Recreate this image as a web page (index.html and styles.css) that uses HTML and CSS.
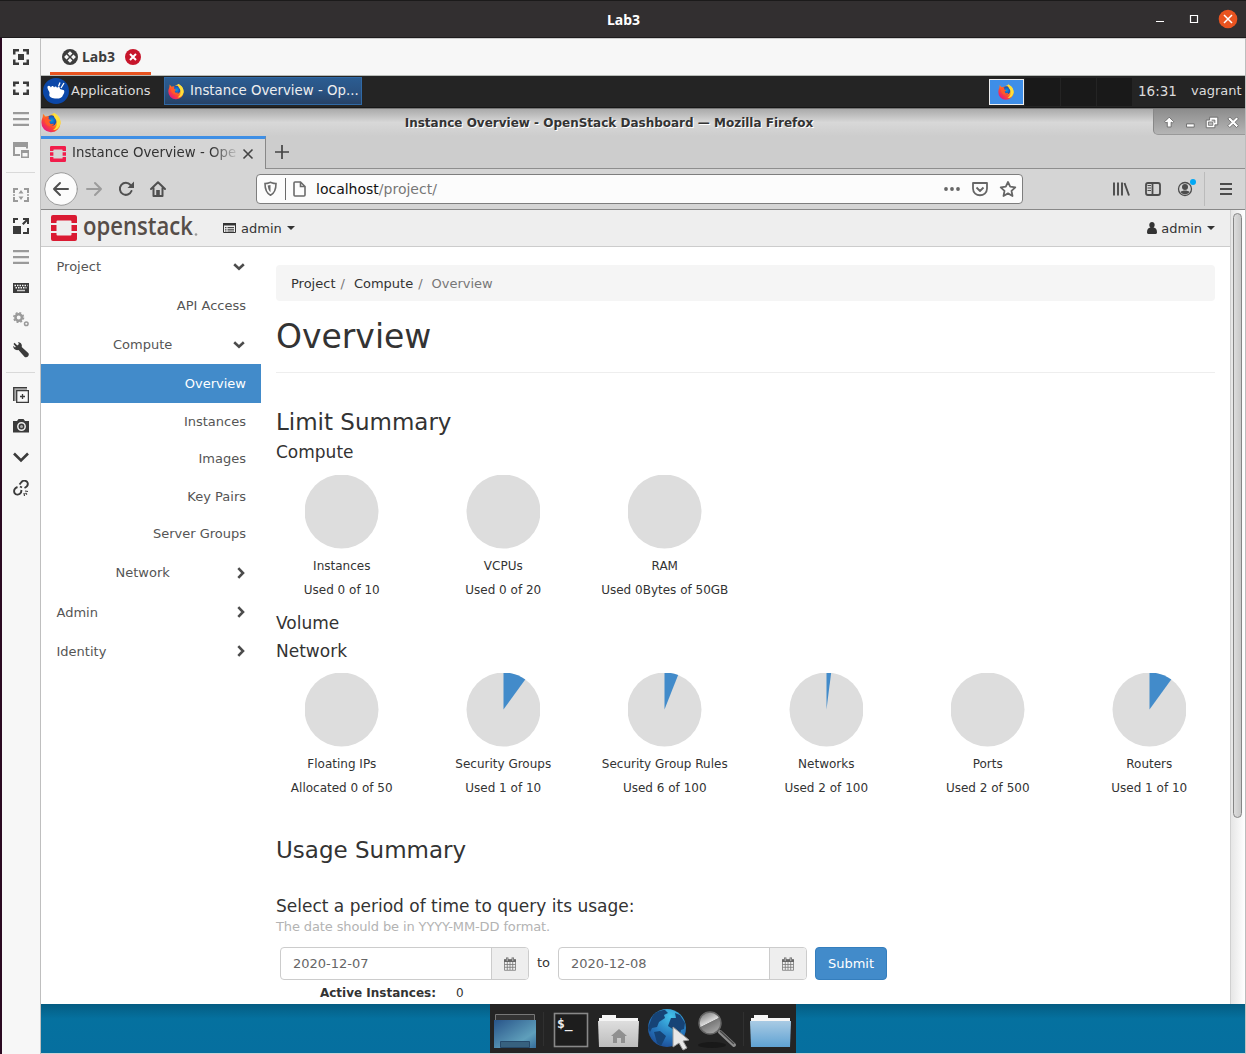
FILE: index.html
```html
<!DOCTYPE html>
<html lang="en">
<head>
<meta charset="utf-8">
<title>Lab3</title>
<link rel="stylesheet" href="styles.css">
</head>
<body>
<svg class="defs" width="0" height="0" aria-hidden="true">
  <defs>
    <linearGradient id="ffBody" x1="0.9" y1="0.1" x2="0.15" y2="0.9">
      <stop offset="0" stop-color="#fff44f"/><stop offset="0.35" stop-color="#ffa31a"/><stop offset="0.65" stop-color="#ff4a2f"/><stop offset="1" stop-color="#e31587"/>
    </linearGradient>
    <radialGradient id="ffGlobe"><stop offset="0" stop-color="#0a9de0"/><stop offset="1" stop-color="#1e3fae"/></radialGradient>
    <symbol id="firefox" viewBox="0 0 20 20">
      <path fill="url(#ffBody)" d="M2 1.2 4.5 4 8 3.3 13 0.6C17 2.5 19.8 6 19.6 10.6A9.6 9.4 0 1 1 .4 10C.4 7 1.6 5.600 1.800 4z"/>
      <circle cx="10.500" cy="8" r="5.200" fill="url(#ffGlobe)"/>
      <path fill="#ff5a2a" d="M4 4.500 8 4 7.600 6.500 10.300 8 8.200 9.300 9.500 11.500 13 11.200C12 14 8 14.500 5.500 12 3.500 10 3.300 7 4 4.500z"/>
      <path fill="#ffe03a" d="M12.600.7C17 2.500 19.800 6.500 19.400 11 18.500 15.500 15 17.800 12 17.600 15.500 15.500 16.500 12 15.500 8.500 14.800 6 12 4.500 12.600.7z"/>
    </symbol>
    <symbol id="stack" viewBox="0 0 26 26">
      <path d="M2 0h22a2 2 0 0 1 2 2v6h-5.500V6.500a1 1 0 0 0-1-1h-13a1 1 0 0 0-1 1V8H0V2a2 2 0 0 1 2-2zM0 10h5.500v6H0zM20.500 10H26v6h-5.500zM0 18h5.500v1.500a1 1 0 0 0 1 1h13a1 1 0 0 0 1-1V18H26v6a2 2 0 0 1-2 2H2a2 2 0 0 1-2-2z"/>
    </symbol>
    <symbol id="calendar" viewBox="0 0 12 14">
      <path fill="none" stroke="#777" stroke-width=".8" d="M.5 3h11v10.300H.5zM.5 7.500h11M.5 10.300h11M3.300 5v8M6 5v8M8.700 5v8"/>
      <path fill="#666" d="M0 2.300h12V5H0zM2 .5h2.400v4H2zM7.600.5H10v4H7.600z"/>
      <path stroke="#eee" stroke-width=".7" d="M3.200 1.200v2.800M8.800 1.200v2.800"/>
    </symbol>
    <symbol id="down" viewBox="0 0 12 8"><path fill="none" stroke="#4c4c4c" stroke-width="2.600" d="M1.200 1.300 6 5.800l4.800-4.500"/></symbol>
    <symbol id="right" viewBox="0 0 8 12"><path fill="none" stroke="#4c4c4c" stroke-width="2.600" d="m1.300 1.200 4.700 4.800-4.700 4.800"/></symbol>
    <linearGradient id="monitor" x1="0" y1="0" x2="1" y2="1"><stop offset="0" stop-color="#285489"/><stop offset=".7" stop-color="#5f9fbb"/><stop offset="1" stop-color="#356c9b"/></linearGradient>
    <linearGradient id="grayFolder" x1="0" y1="0" x2="0" y2="1"><stop offset="0" stop-color="#dedede"/><stop offset="1" stop-color="#bdbdbd"/></linearGradient>
    <linearGradient id="blueFolder" x1="0" y1="0" x2="0" y2="1"><stop offset="0" stop-color="#a9cbe4"/><stop offset="1" stop-color="#5fa2d3"/></linearGradient>
    <radialGradient id="globe" cx=".6" cy=".2" r=".85"><stop offset="0" stop-color="#43c1ea"/><stop offset=".6" stop-color="#2678bd"/><stop offset="1" stop-color="#1d4c96"/></radialGradient>
    <linearGradient id="lens" x1=".2" y1="0" x2=".7" y2="1"><stop offset="0" stop-color="#777"/><stop offset=".48" stop-color="#ddd"/><stop offset=".5" stop-color="#777"/><stop offset="1" stop-color="#aaa"/></linearGradient>
  </defs>
</svg>

<header class="titlebar">
  <h1>Lab3</h1>
  <svg class="win-buttons" width="80" height="20" viewBox="0 0 80 20">
    <path stroke="#fff" d="M2 11.500h8"/><path fill="none" stroke="#fff" stroke-width="1.200" d="M36.500 5.500h7v7h-7z"/>
    <circle cx="74" cy="9" r="9.300" fill="#e95420"/><path stroke="#fff" stroke-width="1.500" d="m70 5 8 8m0-8-8 8"/>
  </svg>
</header>

<div class="viewer">
  <aside class="tools">
    <i><svg viewBox="0 0 16 16"><path d="M0 5.500V0h6v2.500H2.500v3zM10 0h6v5.500h-2.500v-3H10zM0 10.500h2.500v3H6V16H0zM13.500 10.500H16V16h-6v-2.500h3.500zM5 5h6v6H5z"/></svg></i>
    <i><svg viewBox="0 0 16 16"><path d="M0 6.500V1.500h6V4H2.500v2.500zM10 1.500h6v5h-2.500V4H10zM0 9.500h2.500v3H6V15H0zM13.500 9.500H16V15h-6v-2.500h3.500z"/></svg></i>
    <i class="dim"><svg viewBox="0 0 16 16"><path d="M0 1h16v2.300H0zM0 7h16v2.300H0zM0 12.700h16V15H0z"/></svg></i>
    <i class="dim"><svg viewBox="0 0 16 16"><path d="M0 0h15v6.500h-2V5H2v7h5v2H0zM8 8h8v8H8zm1.500 3v3.500h5V11z" fill-rule="evenodd"/></svg></i>
    <hr>
    <i class="dim"><svg viewBox="0 0 16 16"><path d="M0 6V1h5v2H2v3zM11 1h5v5h-2V3h-3zM0 10h2v3h3v2H0zM14 10h2v5h-5v-2h3zM8 3l2.500 3.500h-5zM8 13l2.500-3.500h-5zM0 7.200h2v1.600H0zM14 7.200h2v1.600h-2z"/></svg></i>
    <i><svg viewBox="0 0 16 16"><path d="M0 0h5v2H2v3H0zM10 0h6v6h-2V3.500L10.500 7 9 5.500 12.500 2H10zM0 8h8v8H0zM10 14h4v-4h2v6h-6z"/></svg></i>
    <i class="dim"><svg viewBox="0 0 16 16"><path d="M0 1h16v2.300H0zM0 7h16v2.300H0zM0 12.700h16V15H0z"/></svg></i>
    <i><svg viewBox="0 0 16 16"><path d="M0 3h16v10H0z"/><path stroke="#f7f7f7" stroke-width="1.400" stroke-dasharray="1.500 1" d="M1.500 5.500h13M2.500 7.800h11"/><path stroke="#ccc" stroke-width="1.500" d="M4 10.500h8"/></svg></i>
    <i class="dim"><svg viewBox="0 0 16 16"><circle cx="5.700" cy="6.500" r="3.200" fill="none" stroke="#9a9a9a" stroke-width="2.500"/><circle cx="5.700" cy="6.500" r="4.800" fill="none" stroke="#9a9a9a" stroke-width="1.600" stroke-dasharray="2 1.770"/><circle cx="13.300" cy="12.700" r="1.800" fill="none" stroke="#9a9a9a" stroke-width="1.500"/></svg></i>
    <i><svg viewBox="0 0 16 16"><path d="M1.500.8 4.300 3.600 6 1.900 4.800.2C8 0 9.400 2.500 8.700 5l6.800 6.300c1.200 2.500-1.500 5-3.800 3.700L5.500 8C2.500 8.700 0 7 .2 3.700L2 5.500l.8-.8L.5 2z"/></svg></i>
    <hr>
    <i><svg viewBox="0 0 16 16"><path fill="#aaa" d="M1 1h13v2H3v11H1z"/><path fill="none" stroke="#3b3b3b" d="M.7 14V.6H14M3.700 3.700h11.700v11.700H3.700z" stroke-width="1.300"/><path stroke="#3b3b3b" stroke-width="1.300" d="M9.500 7v5M7 9.500h5"/></svg></i>
    <i><svg viewBox="0 0 16 16"><path d="M0 3h4l1.500-2h5L12 3h4v11.500H0z"/><circle cx="8.500" cy="8.500" r="3.700" fill="#3b3b3b" stroke="#eee" stroke-width="1.500"/><circle cx="8.500" cy="8.500" r="1.500" fill="#aaa"/></svg></i>
    <i><svg viewBox="0 0 16 16"><path fill="none" stroke="#3b3b3b" stroke-width="2.600" d="m1 4.500 7 7 7-7"/></svg></i>
    <i><svg viewBox="0 0 16 16"><path fill="none" stroke="#3b3b3b" stroke-width="1.900" d="M6.500 4.500 8.500 2C10.500-.2 14 .5 14.700 3c.6 2.500-1 4-3.200 5M9 7.500 7 6.500M4.500 7C1.500 8 .5 10.500 1.500 13c1.500 2.500 5 2 6.500-.5L8.500 10"/><path stroke="#3b3b3b" stroke-width="1.200" d="m12 11 3 .5M11 13l.5 3M12.500 13l1.500 1.500"/></svg></i>
  </aside>

  <div class="remote">
    <nav class="viewer-tabs">
      <div class="viewer-tab">
        <svg width="16" height="16" viewBox="0 0 16 16"><circle cx="8" cy="8" r="8" fill="#3d3d3d"/><path fill="#f7f7f7" d="m8 2.200 2.400 2.400L8 7 5.600 4.600zM4.500 5.600 7 8l-2.500 2.400L2.100 8zM11.500 5.600 13.900 8l-2.400 2.400L9 8zM8 9l2.400 2.400L8 13.800l-2.400-2.400z"/></svg>
        <span>Lab3</span>
        <svg width="16" height="16" viewBox="0 0 16 16"><circle cx="8" cy="8" r="8" fill="#c7162b"/><path stroke="#fff" stroke-width="2" d="m5 5 6 6m0-6-6 6"/></svg>
      </div>
    </nav>

    <div class="panel">
      <svg class="xfce" width="26" height="26" viewBox="0 0 26 26"><circle cx="13" cy="13" r="13" fill="#0b47a8"/><path fill="#fff" d="M4.500 8.500C6 7 7 8 8 9.500c.5-2 2.500-2 3 0 .8-1.500 2.500-1.300 3 .3C15.500 8.500 17 9 17 11l4 1.200c1 2-.5 3.800-1 4.800-1 3-4 4-8 3.500-4-.5-6.500-2-5.500-5C7 13.500 4 11.500 4.500 8.500z"/><path stroke="#fff" stroke-width="1.300" d="m15.500 8.500 1.500-4M18 10l3-5"/></svg>
      <span class="apps">Applications</span>
      <div class="task"><svg width="16" height="17"><use href="#firefox"/></svg><span>Instance Overview - Op...</span></div>
      <div class="pager"><b><svg width="16" height="16"><use href="#firefox"/></svg></b><b></b><b></b><b></b></div>
      <span class="clock">16:31</span><span class="user">vagrant</span>
    </div>

    <div class="ff-title">
      <svg width="20" height="21"><use href="#firefox"/></svg>
      <h2>Instance Overview - OpenStack Dashboard — Mozilla Firefox</h2>
      <svg class="ff-win" width="92" height="26" viewBox="0 0 92 26">
        <g fill="#fff" stroke="#666" stroke-width=".9"><path d="m14.500 8.500 4.700 4.700-1.200 1.300-1.500-.8v5h-4v-5l-1.500.8-1.200-1.300zM32.500 15.500h8v3.300h-8zM56.500 8.500h8.500v8h-3v3h-9v-8h3.500z"/><path d="m77.500 8.300 3.500 3.500 3.500-3.500 2 2-3.500 3.500 3.500 3.500-2 2-3.500-3.500-3.500 3.500-2-2 3.500-3.500-3.500-3.500z"/></g>
        <path fill="#bbb" stroke="#666" stroke-width=".8" d="M55.300 13.500h4.500V17h-4.500zM58.500 11.500h3.500v3"/>
      </svg>
    </div>

    <div class="ff-tabs">
      <div class="ff-tab">
        <svg width="16" height="16" fill="#f21d4b"><use href="#stack"/></svg>
        <span>Instance Overview - Ope</span>
        <svg width="12" height="12" viewBox="0 0 12 12"><path stroke="#444" stroke-width="1.600" d="m1.500 1.500 9 9m0-9-9 9"/></svg>
      </div>
      <svg class="plus" width="14" height="14" viewBox="0 0 14 14"><path stroke="#444" stroke-width="1.700" d="M7 0v14M0 7h14"/></svg>
    </div>

    <div class="ff-nav">
      <svg width="130" height="34" viewBox="0 0 130 34" fill="none" stroke="#505050" stroke-width="2" stroke-linecap="round" stroke-linejoin="round">
        <circle cx="17" cy="17" r="16.300" fill="#fcfcfc" stroke="#9a9a9a" stroke-width="1"/>
        <path d="M24 17H10m6-6-6 6 6 6"/><path stroke="#9c9c9c" d="M43 17h14m-6-6 6 6-6 6"/>
        <path d="M86.500 13a6 6 0 1 0 1 6"/><path fill="#505050" stroke="none" d="M90 9.500V16h-6.500z"/>
        <path d="m107 17 7-6.800 7 6.800m-11.500-1v8h9v-8"/><path fill="#505050" stroke="none" d="M112.200 18h3.600v6h-3.600z"/>
      </svg>
      <div class="url">
        <svg width="46" height="22" viewBox="0 0 46 22" fill="none" stroke="#6a6a6a" stroke-width="1.600">
          <path d="M1 5.500c3 0 4-.8 5.500-1.200C8 4.700 9 5.500 12 5.500 12 11 11 15 6.500 17.200 2 15 1 11 1 5.500z"/><path d="M6.500 7v7.200C4.500 12.500 4 10 3.700 7.500z" fill="#6a6a6a" stroke="none"/><path d="M21.500 0v22" stroke-width="1"/><path d="M31 4h5.500l4.500 4.500V17a1 1 0 0 1-1 1h-9a1 1 0 0 1-1-1V5a1 1 0 0 1 1-1zm5.500 0v4.500H41"/>
        </svg>
        <span>localhost<em>/project/</em></span>
        <svg class="url-end" width="74" height="20" viewBox="0 0 74 20" fill="none" stroke="#666" stroke-width="1.800" stroke-linejoin="round">
          <g fill="#666" stroke="none"><circle cx="3" cy="10" r="1.900"/><circle cx="9" cy="10" r="1.900"/><circle cx="15" cy="10" r="1.900"/></g>
          <path d="M30 4h14v5.500c0 9-14 9-14 0zM33.500 8.500 37 12l3.500-3.500"/><path d="m65 3 2.200 4.700 5.100.6-3.800 3.500 1 5.200-4.500-2.600-4.500 2.600 1-5.200-3.800-3.500 5.100-.6z"/>
        </svg>
      </div>
      <svg class="ff-actions" width="125" height="34" viewBox="0 0 125 34" fill="none" stroke="#4c4c4c" stroke-width="1.800">
        <path d="M5 10.500v13M9 10.500v13M13 10.500v13M15.500 11l4.500 12.500" stroke-width="1.900"/>
        <rect x="37" y="11" width="14" height="12" rx="2"/><path d="M43.500 11v12"/><path stroke-width="1" d="M38.500 13.500h3.500M38.500 16h3.500M38.500 18.500h3.500"/>
        <circle cx="76" cy="17" r="6.500" stroke-width="1.300"/><g fill="#4c4c4c" stroke="none"><circle cx="76" cy="15" r="3"/><path d="M71.500 20c2-2 7-2 9 0-2 3-7 3-9 0z"/></g><circle cx="84" cy="10" r="3" fill="#00a8f5" stroke="none"/>
        <path stroke="#bbb" stroke-width="1" d="M95.500 0v34"/><path d="M111 12h12M111 17h12M111 22h12" stroke-width="2"/>
      </svg>
    </div>

    <div class="browser-view">
      <div class="page">
        <header class="topbar">
          <svg class="brand" width="150" height="36" viewBox="0 -3 150 36"><svg width="26" height="26" y="2" fill="#da1a32"><use href="#stack"/></svg><text x="32" y="22" textLength="110" lengthAdjust="spacingAndGlyphs">openstack</text><circle cx="145" cy="21.500" r="1.300" fill="#999"/></svg>
          <svg width="13" height="10" viewBox="0 0 13 10"><path fill="none" stroke="#333" d="M.5.500h12v9H.5z"/><path fill="#333" d="M0 0h13v2.500H0z"/><path stroke="#333" d="M2 4.500h1.500m1 0H11M2 6.300h1.500m1 0H11M2 8h1.500m1 0H11" stroke-width=".9"/></svg>
          <span>admin</span><i class="caret"></i>
          <svg class="person" width="10" height="12" viewBox="0 0 10 12"><path fill="#333" d="M5 0c3.300 0 3.300 4.500 1.500 5.500C9 6 10 7.500 10 10.500 10 12 9 12 8 12H2c-1 0-2 0-2-1.500C0 7.500 1 6 3.500 5.500 1.700 4.500 1.700 0 5 0z"/></svg>
          <span>admin</span><i class="caret"></i>
        </header>
        <div class="columns">
          <nav class="side">
            <a class="group">Project<svg width="12" height="8"><use href="#down"/></svg></a>
            <a>API Access</a>
            <a class="group sub">Compute<svg width="12" height="8"><use href="#down"/></svg></a>
            <a class="active">Overview</a>
            <a class="leaf">Instances</a><a class="leaf">Images</a><a class="leaf">Key Pairs</a><a class="leaf">Server Groups</a>
            <a class="group net">Network<svg width="8" height="12"><use href="#right"/></svg></a>
            <a class="group low">Admin<svg width="8" height="12"><use href="#right"/></svg></a>
            <a class="group low">Identity<svg width="8" height="12"><use href="#right"/></svg></a>
          </nav>
          <main>
            <div class="crumbs"><span>Project</span><em>/</em><span>Compute</span><em>/</em><em class="here">Overview</em></div>
            <h1>Overview</h1>
            <h3>Limit Summary</h3>
            <h4 class="first">Compute</h4>
            <div class="quotas">
              <div><svg viewBox="-37 -37 74 74"><circle r="37"/></svg><p>Instances</p><p>Used 0 of 10</p></div>
              <div><svg viewBox="-37 -37 74 74"><circle r="37"/></svg><p>VCPUs</p><p>Used 0 of 20</p></div>
              <div><svg viewBox="-37 -37 74 74"><circle r="37"/></svg><p>RAM</p><p>Used 0Bytes of 50GB</p></div>
            </div>
            <h4 class="volume">Volume</h4>
            <h4 class="network">Network</h4>
            <div class="quotas">
              <div><svg viewBox="-37 -37 74 74"><circle r="37"/></svg><p>Floating IPs</p><p>Allocated 0 of 50</p></div>
              <div><svg viewBox="-37 -37 74 74"><circle r="37"/><path d="M0 0V-37A37 37 0 0 1 21.750-29.930z"/></svg><p>Security Groups</p><p>Used 1 of 10</p></div>
              <div><svg viewBox="-37 -37 74 74"><circle r="37"/><path d="M0 0V-37A37 37 0 0 1 13.620-34.400z"/></svg><p>Security Group Rules</p><p>Used 6 of 100</p></div>
              <div><svg viewBox="-37 -37 74 74"><circle r="37"/><path d="M0 0V-37A37 37 0 0 1 4.640-36.710z"/></svg><p>Networks</p><p>Used 2 of 100</p></div>
              <div><svg viewBox="-37 -37 74 74"><circle r="37"/></svg><p>Ports</p><p>Used 2 of 500</p></div>
              <div><svg viewBox="-37 -37 74 74"><circle r="37"/><path d="M0 0V-37A37 37 0 0 1 21.750-29.930z"/></svg><p>Routers</p><p>Used 1 of 10</p></div>
            </div>
            <h3 class="usage">Usage Summary</h3>
            <h4 class="period">Select a period of time to query its usage:</h4>
            <p class="help">The date should be in YYYY-MM-DD format.</p>
            <div class="dates">
              <div class="date"><span>2020-12-07</span><b><svg width="12" height="14"><use href="#calendar"/></svg></b></div>
              <span class="to">to</span>
              <div class="date"><span>2020-12-08</span><b><svg width="12" height="14"><use href="#calendar"/></svg></b></div>
              <button>Submit</button>
            </div>
            <div class="stat"><b>Active Instances:</b><span>0</span></div>
          </main>
        </div>
      </div>
      <div class="scroll"><div class="thumb"></div></div>
    </div>

    <footer class="desktop">
      <div class="dock">
        <svg width="306" height="48" viewBox="0 0 306 48">
          <path fill="#333" stroke="#777" d="M5.500 10.500h39v8h-39z"/><path fill="url(#monitor)" d="M4 16h42v28H4z"/><path fill="#37617f" stroke="#26496a" d="M10.500 37.500h29v6h-29z"/>
          <path stroke="#303030" d="M53.500 8v34M253.500 8v34"/>
          <rect x="64.500" y="9.500" width="33" height="33" fill="#1d1d1d" stroke="#888" stroke-width="1.600"/><text class="prompt" x="67" y="24">$_</text>
          <path fill="#f5f5f5" d="M112 11h14v3h22v6h-39v-6h3z"/><path fill="url(#grayFolder)" d="M108 17h41l-1 26h-39z"/><path fill="#909090" d="m129 25 8 7h-2v7h-4v-5h-4v5h-4v-7h-2z"/>
          <circle cx="177" cy="24" r="19" fill="url(#globe)"/><path fill="#164376" d="M162 13c3-5 8-7 13-7l3 3-4 2 1 3-6 4-2 5-5 1-2 4-2-4zM178 22l3-8 5 0-1-5 5 2 5 8-1 6-3 1-2 9-5-3 0-6zM164 28l6-1 6 5-3 6-2 4-4-3z"/>
          <path fill="#e8e8e8" stroke="#999" d="m183 23 16 13-6 1 4 7-4 2-4-7-6 4z"/>
          <path stroke="#8c8c8c" stroke-width="4" stroke-linecap="round" d="m230 28 14 13"/><path stroke="#444" stroke-width="1.500" d="m230 27 14 13"/><circle cx="220" cy="19" r="11" fill="url(#lens)" stroke="#666" stroke-width="1.500"/><ellipse cx="222" cy="41" rx="14" ry="3" fill="#191919"/>
          <path fill="#f5f5f5" d="M264 11h14v3h22v6h-39v-6h3z"/><path fill="url(#blueFolder)" d="M260 17h41l-1 26h-39z"/>
        </svg>
      </div>
    </footer>
  </div>
</div>
</body>
</html>
```
FILE: styles.css
```css
* { box-sizing: border-box; }
body { margin: 0; width: 1246px; height: 1054px; overflow: hidden; display: flex; flex-direction: column; font: 13px "DejaVu Sans", sans-serif; color: #333; background: #f7f7f7; }
h1, h2, h3, h4, p { margin: 0; font-weight: 400; }
svg { display: block; flex: none; }
i, em { font-style: normal; }
.defs { position: absolute; }

.titlebar { height: 38px; flex: none; display: grid; grid-template-columns: 1fr auto 1fr; align-items: center; background: #322f30; border-top: 1px solid #1b1a1a; border-bottom: 1px solid #1d1b1c; color: #fff; }
.titlebar h1 { grid-column: 2; font: 700 14px/20px "Noto Sans", sans-serif; padding: 2px 0 0 1px; }
.win-buttons { justify-self: end; margin-right: 11px; margin-top: 1px; width: 82px; overflow: visible; }

.viewer { flex: 1; display: flex; min-height: 0; border-left: 2px solid #2b0a22; }
.tools { width: 39px; flex: none; padding-top: 3px; border-right: 1px solid #bfbfbf; background: #f7f7f7; }
.tools i { display: flex; height: 31px; padding: 8px 0 0 11px; fill: #3b3b3b; }
.tools i svg { width: 16px; height: 16px; }
.tools .dim { fill: #9a9a9a; }
.tools hr { height: 1px; border: 0; margin: 7px 5px 6px 4px; background: #d9d9d9; }

.remote { flex: 1; min-width: 0; display: flex; flex-direction: column; border-right: 1px solid #bdbdbd; border-bottom: 1px solid #cfd3d4; }
.viewer-tabs { height: 38px; flex: none; display: flex; border-top: 1px solid #ccc; border-bottom: 1px solid #b8bcb8; background: #f7f7f7; padding-left: 9px; }
.viewer-tab { width: 101px; display: flex; align-items: center; padding: 2px 0 0 12px; border-bottom: 3px solid #e95420; font: 700 14px "Noto Sans", sans-serif; color: #3d3d3d; }
.viewer-tab span { width: 38px; margin: 0 5px 0 4px; }

.panel { height: 32px; flex: none; display: flex; align-items: center; background: #242424; border-bottom: 1px solid #161616; color: #dcdcdc; padding-left: 2px; }
.xfce { margin-top: -1px; }
.panel span { line-height: 28px; padding-bottom: 2px; white-space: nowrap; }
.apps { width: 94px; margin-left: 2px; }
.task { width: 198px; height: 28px; display: flex; align-items: center; gap: 6px; padding-left: 3px; background: linear-gradient(#2b5c91, #2a5383 50%, #274266); border: 1px solid #3069a5; color: #eee; font-size: 13.330px; margin: 0 0 1px -1px; }
.panel .task span { padding: 0; }
.pager { margin-left: auto; display: flex; gap: 1px; height: 28px; }
.pager b { width: 35px; background: #191919; display: grid; place-items: center; }
.pager b:first-child { background: #3e8ee8; border: 1px solid #eee; height: 26px; margin-top: 1px; padding-right: 2px; }
.clock { margin-left: 6px; width: 53px; font-size: 13.500px; }
.user { width: 54px; }

.ff-title { height: 28px; flex: none; display: flex; align-items: flex-start; justify-content: space-between; background: linear-gradient(#aaa, #d8d8d8 50%, #cdcdcd); border-top: 1px solid #777; }
.ff-title > svg:first-child { margin-top: 3px; }
.ff-title h2 { font-size: 12px; line-height: 28px; font-weight: 700; text-shadow: 1px 1px #fff; margin-left: 4px; white-space: nowrap; }
.ff-win { background: linear-gradient(#8c8c8c, #b5b5b5); border-left: 1px solid #888; border-bottom: 1px solid #999; border-radius: 0 0 0 5px; }

.ff-tabs { height: 33px; flex: none; display: flex; background: #cdcdcd; box-shadow: inset 0 -1px #8e8e8e; }
.ff-tab { width: 225px; display: flex; align-items: center; padding: 0 0 2px 9px; background: #d5d5d5; border-top: 3px solid #3f8fe5; border-right: 1px solid #888; font-size: 13.330px; }
.ff-tab span { width: 164px; margin: -1px 6px 0 6px; white-space: nowrap; mask-image: linear-gradient(90deg, #000 85%, rgba(0, 0, 0, .15)); }
.ff-tab svg { margin-top: 1px; }
.plus { margin: 9px 0 0 9px; }
.ff-nav { height: 41px; flex: none; display: flex; align-items: center; background: #d5d5d5; border-bottom: 1px solid #888; padding-left: 3px; }
.url { width: 767px; height: 30px; margin-left: 82px; display: flex; align-items: center; background: #fcfcfc; border: 1px solid #7e7e7e; border-radius: 4px; padding: 0 5px 0 7px; font-size: 14px; color: #111; }
.url span { margin-left: 6px; }
.url em { color: #777; }
.url-end { margin-left: auto; }
.ff-actions { margin-left: 86px; }

.browser-view { height: 794px; flex: none; display: flex; }
.page { flex: 1; background: #fff; overflow: hidden; }
.topbar { height: 37px; display: flex; align-items: center; background: #eee; border-bottom: 1px solid #ccc; padding: 0 15px 0 10px; }
.brand { margin: 0 22px 0 0; }
.brand text { font: 600 25px "Open Sans", sans-serif; fill: #564d48; }
.topbar span { margin: 0 5px; }
.caret { border: 4px solid transparent; border-top-color: #333; border-bottom: 0; }
.person { margin-left: auto; margin-right: -1px; }
.columns { display: flex; }
.side { width: 220px; flex: none; }
.side a { height: 39px; display: flex; align-items: center; justify-content: flex-end; padding: 0 15px; color: #555; }
.side .group { justify-content: space-between; padding: 0 16px 0 15.500px; }
.side .sub { padding-left: 72px; }
.side .net { padding-left: 74.500px; }
.side .leaf { height: 37.500px; padding-bottom: .6px; }
.side .low { padding-top: 1px; }
.side .active { background: #428bca; color: #fff; }

main { flex: 1; padding: 18px 15px 0; }
.crumbs { height: 36px; background: #f5f5f5; border-radius: 4px; display: flex; align-items: center; padding: 0 15px; }
.crumbs em { margin: 0 9px 0 5px; color: #777; }
.crumbs .here { margin: 0; }
main h1 { font-size: 33px; line-height: 38px; padding: 17px 0 16px; border-bottom: 1px solid #eee; }
main h3 { font-size: 23px; line-height: 28px; margin-top: 35px; }
main h4 { font-size: 17px; line-height: 22px; }
.first { margin: 5px 0 11px; }
.volume { margin-top: 10px; }
.network { margin: 6px 0 10px; }
.quotas { display: grid; grid-template-columns: repeat(6, 161.500px); margin: 0 -15px; font-size: 12px; line-height: 24px; text-align: center; }
.quotas svg { width: 75px; height: 75px; margin: 0 auto 5px; padding: .5px; }
.quotas circle { fill: #ddd; }
.quotas path { fill: #428bca; }
main .usage { margin-top: 36px; }
.period { margin-top: 31px; }
.help { line-height: 18px; margin-top: 1px; color: #b3b3b3; letter-spacing: -.125px; }
.dates { display: flex; margin: 11px 0 0 4px; height: 33px; }
.date { width: 249px; display: flex; border: 1px solid #ccc; border-radius: 4px; color: #666; overflow: hidden; }
.date span { flex: 1; padding-left: 12px; line-height: 31px; }
.date b { width: 37px; border-left: 1px solid #ccc; background: #eee; display: grid; place-items: center; }
.to { width: 29px; text-align: center; line-height: 31px; }
button { width: 72px; margin-left: 8px; padding: 0; font: inherit; color: #fff; background: #428bca; border: 1px solid #357ebd; border-radius: 4px; }
.stat { display: flex; font-size: 12px; line-height: 18px; margin-top: 4px; }
.stat b { width: 160px; text-align: right; margin-right: 20px; }
.scroll { width: 15px; flex: none; padding: 3px 3px 0 2px; background: linear-gradient(90deg, #e6e6e6, #fff); border-left: 1px solid #d0d0d0; }
.thumb { width: 9px; height: 605px; border: 1px solid #858585; border-radius: 5px; background: linear-gradient(90deg, #ddd, #c7c7c7); }

.desktop { flex: 1; display: flex; justify-content: center; background: linear-gradient(#045c82, #05719f 30%, #066f9f); }
.dock { width: 306px; background: #242424; }
.prompt { font: 700 13px "DejaVu Sans Mono", monospace; fill: #eee; }
```
